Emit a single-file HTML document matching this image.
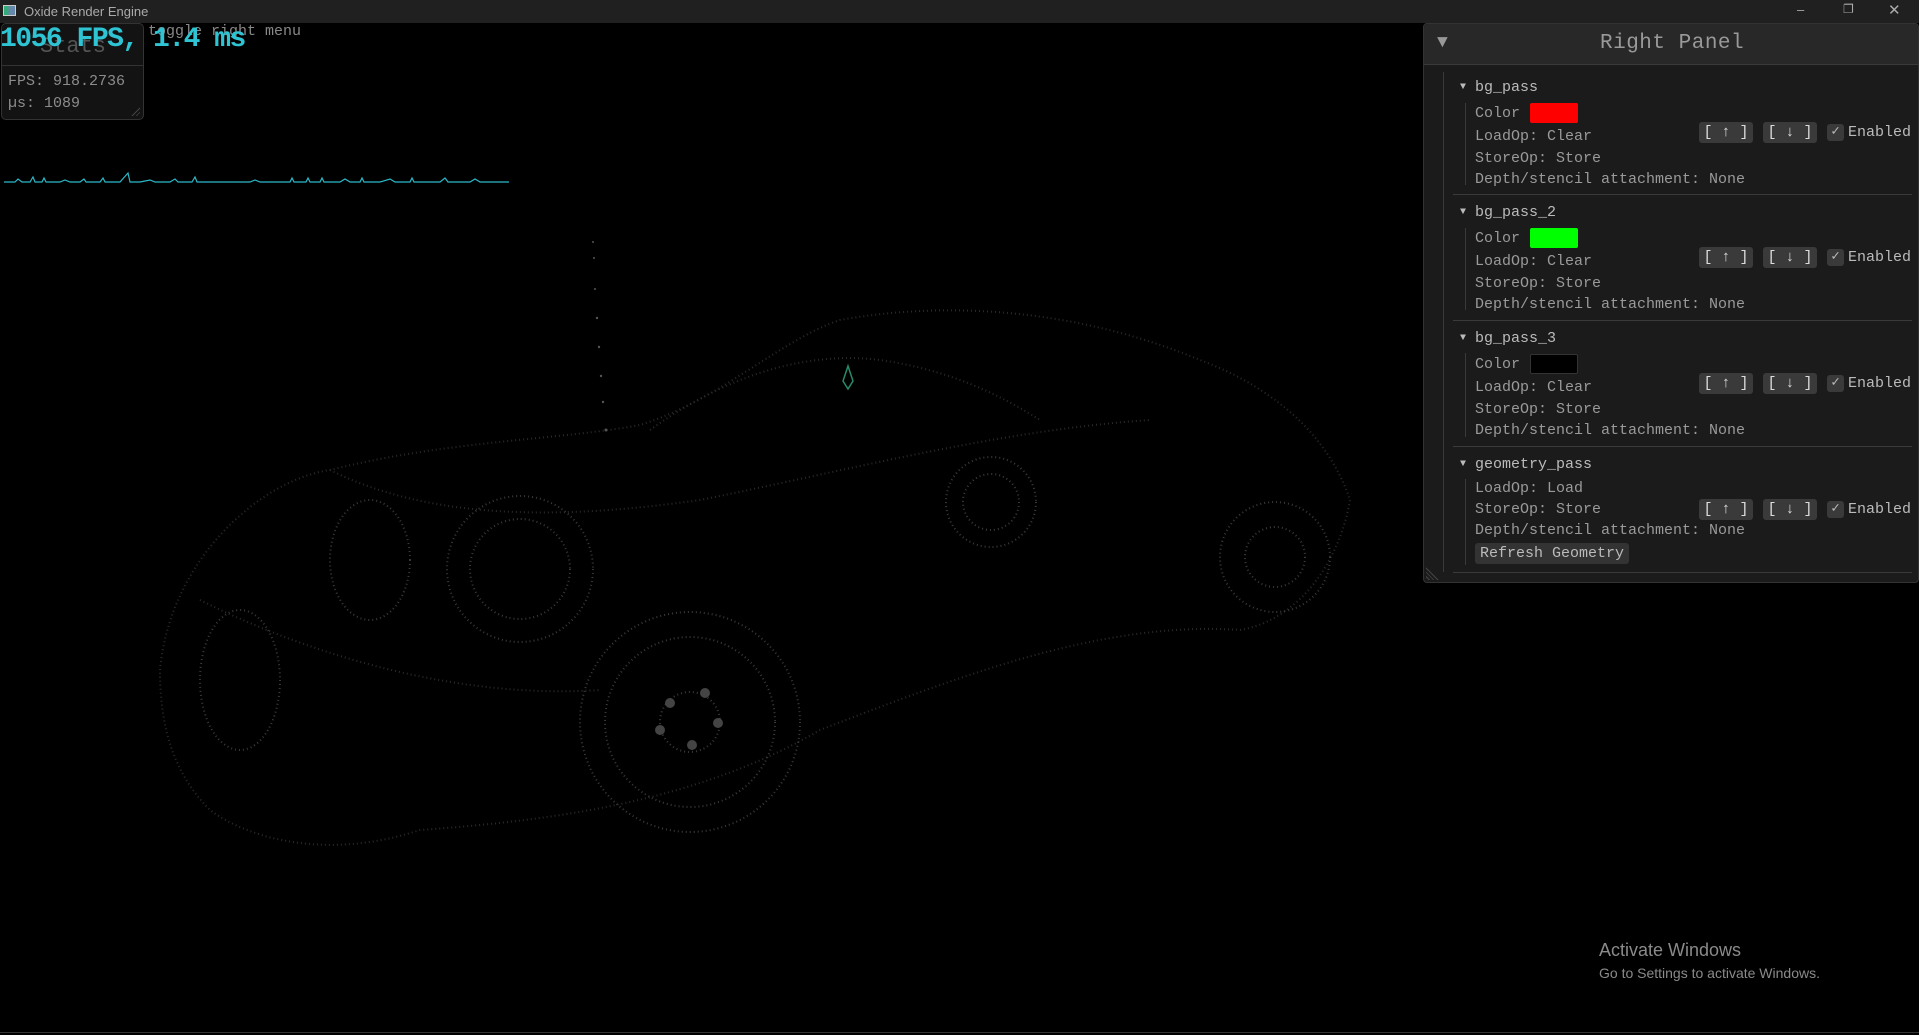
<!DOCTYPE html>
<html><head><meta charset="utf-8"><style>
*{margin:0;padding:0;box-sizing:border-box}
body{width:1919px;height:1035px;background:#000;position:relative;overflow:hidden;font-family:"Liberation Mono",monospace;color:#8c8c8c}
.abs{position:absolute;white-space:nowrap}
#tb{left:0;top:0;width:1919px;height:23px;background:#202020}
.m{font-size:15px;line-height:18px}
.rp{left:1423px;top:23px;width:496px;height:560px;background:#1b1b1b;border:1px solid #333;border-radius:4px}
.btn{background:#3a3a3a;border-radius:3px;width:54px;height:21px;color:#ddd;font-size:15px;line-height:21px;text-align:center}
.cb{background:#3a3a3a;border-radius:3px;width:17px;height:17px;color:#bbb;font-size:14px;line-height:17px;text-align:center}
.sep{height:1px;background:#3a3a3a;left:1453px;width:459px}
.vl{width:1px;background:#3a3a3a}
.t{font-size:15px;color:#9a9a9a;margin-top:2px}
</style></head><body>
<div class="abs" id="tb"></div>
<div class="abs" style="left:3px;top:5px;width:13px;height:11px;border:1px solid #ccc;background:linear-gradient(90deg,#3a7 0 40%,#68a 40%)"></div>
<div class="abs" style="left:24px;top:4px;font:13px 'Liberation Sans',sans-serif;color:#aaa">Oxide Render Engine</div>
<div class="abs" style="left:1797px;top:2px;font:13px 'Liberation Sans';color:#aaa">–</div>
<div class="abs" style="left:1843px;top:2px;font:12px 'Liberation Sans';color:#aaa">❐</div>
<div class="abs" style="left:1888px;top:1px;font:15px 'Liberation Sans';color:#aaa">✕</div>

<div class="abs" style="left:1px;top:23px;width:143px;height:97px;background:#131313;border:1px solid #333;border-radius:5px"></div>
<div class="abs" style="left:2px;top:65px;width:141px;height:1px;background:#333"></div>
<div class="abs" style="left:40px;top:34px;font-size:22px;color:#555">Stats</div>
<div class="abs m" style="left:8px;top:73px">FPS: 918.2736</div>
<div class="abs m" style="left:8px;top:95px">µs: 1089</div>
<div class="abs" style="left:130px;top:106px;width:10px;height:10px;background:repeating-linear-gradient(135deg,transparent 0 2px,#444 2px 3px);clip-path:polygon(100% 0,100% 100%,0 100%)"></div>
<div class="abs" style="left:148px;top:23px;font-size:15px;color:#888">toggle right menu</div>
<div class="abs" style="left:0px;top:24px;font-size:28px;font-weight:bold;color:#2ec4d4;letter-spacing:-1.5px">1056 FPS, 1.4 ms</div>
<svg class="abs" style="left:0;top:170px" width="520" height="20"><polyline fill="none" stroke="#2ab8c8" stroke-width="1.2" points="4,12 15,12 18,9 22,12 30,12 33,7 35,12 42,12 44,8 46,12 60,12 65,10 70,12 80,12 84,9 86,12 100,12 103,8 105,12 110,12 120,12 128,3 130,12 140,12 150,10 155,12 170,12 175,9 178,12 192,12 195,7 197,12 210,12 250,12 255,10 260,12 290,12 292,8 294,12 306,12 308,8 310,12 320,12 322,8 324,12 340,12 345,9 350,12 360,12 362,8 364,12 380,12 390,9 395,12 410,12 412,8 414,12 440,12 445,8 448,12 470,12 475,9 480,12 509,12"/></svg>

<svg class="abs" style="left:0;top:0" width="1919" height="1035">
<g fill="none" stroke="#2a2a2a" stroke-width="2" stroke-dasharray="1 3">
<path d="M160,670 C170,560 260,480 330,470 C450,440 560,440 640,425 C720,400 780,340 840,320 C950,300 1080,310 1200,360 C1280,390 1330,440 1350,500 C1340,560 1300,620 1240,630 C1100,620 950,680 820,730 C700,800 560,820 420,830 C330,860 250,840 210,810 C170,770 160,720 160,670 Z"/>
<path d="M330,470 C430,520 560,520 700,500 C850,470 1000,430 1150,420"/>
<path d="M200,600 C300,650 450,700 600,690"/>
<path d="M650,430 C720,380 800,350 880,360 C950,370 1000,395 1040,420"/>
</g>
<g fill="none" stroke="#3a3a3a" stroke-width="2" stroke-dasharray="1 3">
<circle cx="690" cy="722" r="110"/><circle cx="690" cy="722" r="85"/><circle cx="690" cy="722" r="30"/>
<circle cx="520" cy="569" r="73"/><circle cx="520" cy="569" r="50"/>
<circle cx="1275" cy="557" r="55"/><circle cx="1275" cy="557" r="30"/>
<circle cx="991" cy="502" r="45"/><circle cx="991" cy="502" r="28"/>
<ellipse cx="370" cy="560" rx="40" ry="60"/><ellipse cx="240" cy="680" rx="40" ry="70"/>
</g>
<g fill="#555"><circle cx="593" cy="242" r="1"/><circle cx="594" cy="258" r="1"/><circle cx="595" cy="289" r="1"/><circle cx="597" cy="318" r="1.2"/><circle cx="599" cy="347" r="1.2"/><circle cx="601" cy="376" r="1.2"/><circle cx="603" cy="402" r="1.2"/><circle cx="606" cy="430" r="1.5"/>
<circle cx="670" cy="703" r="5" fill="#444"/><circle cx="705" cy="693" r="5" fill="#444"/><circle cx="718" cy="723" r="5" fill="#444"/><circle cx="692" cy="745" r="5" fill="#444"/><circle cx="660" cy="730" r="5" fill="#444"/></g>
<path d="M848,366 l-5,15 5,8 5,-8z" fill="none" stroke="#2a8a6a" stroke-width="1.5"/>
</svg>

<div class="abs rp"></div>
<div class="abs" style="left:1424px;top:24px;width:494px;height:41px;background:#282828;border-bottom:1px solid #3a3a3a;border-radius:4px 4px 0 0"></div>
<div class="abs" style="left:1437px;top:33px;font-size:18px;color:#999">▼</div>
<div class="abs" style="left:1600px;top:32px;font-size:21px;color:#999;letter-spacing:0.5px">Right Panel</div>
<div class="abs vl" style="left:1443px;top:72px;height:500px"></div>

<div class="abs" style="left:1460px;top:82px;font-size:10px;color:#bbb">▼</div>
<div class="abs t" style="left:1475px;top:77px;color:#bbb">bg_pass</div>
<div class="abs vl" style="left:1465px;top:103px;height:82px"></div>
<div class="abs t" style="left:1475px;top:103px">Color</div>
<div class="abs" style="left:1530px;top:103px;width:48px;height:20px;background:#f00;border-radius:2px"></div>
<div class="abs t" style="left:1475px;top:126px">LoadOp: Clear</div>
<div class="abs t" style="left:1475px;top:148px">StoreOp: Store</div>
<div class="abs t" style="left:1475px;top:169px">Depth/stencil attachment: None</div>
<div class="abs btn" style="left:1699px;top:122px">[ ↑ ]</div>
<div class="abs btn" style="left:1763px;top:122px">[ ↓ ]</div>
<div class="abs cb" style="left:1827px;top:124px">✓</div>
<div class="abs t" style="left:1848px;top:122px;color:#bbb">Enabled</div>
<div class="abs sep" style="top:194px"></div>

<div class="abs" style="left:1460px;top:207px;font-size:10px;color:#bbb">▼</div>
<div class="abs t" style="left:1475px;top:202px;color:#bbb">bg_pass_2</div>
<div class="abs vl" style="left:1465px;top:228px;height:82px"></div>
<div class="abs t" style="left:1475px;top:228px">Color</div>
<div class="abs" style="left:1530px;top:228px;width:48px;height:20px;background:#0f0;border-radius:2px"></div>
<div class="abs t" style="left:1475px;top:251px">LoadOp: Clear</div>
<div class="abs t" style="left:1475px;top:273px">StoreOp: Store</div>
<div class="abs t" style="left:1475px;top:294px">Depth/stencil attachment: None</div>
<div class="abs btn" style="left:1699px;top:247px">[ ↑ ]</div>
<div class="abs btn" style="left:1763px;top:247px">[ ↓ ]</div>
<div class="abs cb" style="left:1827px;top:249px">✓</div>
<div class="abs t" style="left:1848px;top:247px;color:#bbb">Enabled</div>
<div class="abs sep" style="top:320px"></div>

<div class="abs" style="left:1460px;top:333px;font-size:10px;color:#bbb">▼</div>
<div class="abs t" style="left:1475px;top:328px;color:#bbb">bg_pass_3</div>
<div class="abs vl" style="left:1465px;top:353px;height:84px"></div>
<div class="abs t" style="left:1475px;top:354px">Color</div>
<div class="abs" style="left:1530px;top:354px;width:48px;height:20px;background:#000;border:1px solid #333;border-radius:2px"></div>
<div class="abs t" style="left:1475px;top:377px">LoadOp: Clear</div>
<div class="abs t" style="left:1475px;top:399px">StoreOp: Store</div>
<div class="abs t" style="left:1475px;top:420px">Depth/stencil attachment: None</div>
<div class="abs btn" style="left:1699px;top:373px">[ ↑ ]</div>
<div class="abs btn" style="left:1763px;top:373px">[ ↓ ]</div>
<div class="abs cb" style="left:1827px;top:375px">✓</div>
<div class="abs t" style="left:1848px;top:373px;color:#bbb">Enabled</div>
<div class="abs sep" style="top:446px"></div>

<div class="abs" style="left:1460px;top:459px;font-size:10px;color:#bbb">▼</div>
<div class="abs t" style="left:1475px;top:454px;color:#bbb">geometry_pass</div>
<div class="abs vl" style="left:1465px;top:479px;height:86px"></div>
<div class="abs t" style="left:1475px;top:478px">LoadOp: Load</div>
<div class="abs t" style="left:1475px;top:499px">StoreOp: Store</div>
<div class="abs t" style="left:1475px;top:520px">Depth/stencil attachment: None</div>
<div class="abs" style="left:1475px;top:543px;width:154px;height:21px;background:#333;border-radius:3px"></div>
<div class="abs t" style="left:1480px;top:543px;color:#bbb">Refresh Geometry</div>
<div class="abs btn" style="left:1699px;top:499px">[ ↑ ]</div>
<div class="abs btn" style="left:1763px;top:499px">[ ↓ ]</div>
<div class="abs cb" style="left:1827px;top:501px">✓</div>
<div class="abs t" style="left:1848px;top:499px;color:#bbb">Enabled</div>
<div class="abs sep" style="top:572px"></div>
<div class="abs" style="left:1426px;top:566px;width:14px;height:14px;background:repeating-linear-gradient(45deg,transparent 0 2px,#444 2px 3px);clip-path:polygon(0 0,100% 100%,0 100%)"></div>

<div class="abs" style="left:1599px;top:940px;font:18px 'Liberation Sans',sans-serif;color:#8a8a8a">Activate Windows</div>
<div class="abs" style="left:1599px;top:965px;font:14px 'Liberation Sans',sans-serif;color:#8a8a8a">Go to Settings to activate Windows.</div>
<div class="abs" style="left:0;top:1032px;width:1919px;height:1px;background:#333"></div>
</body></html>
